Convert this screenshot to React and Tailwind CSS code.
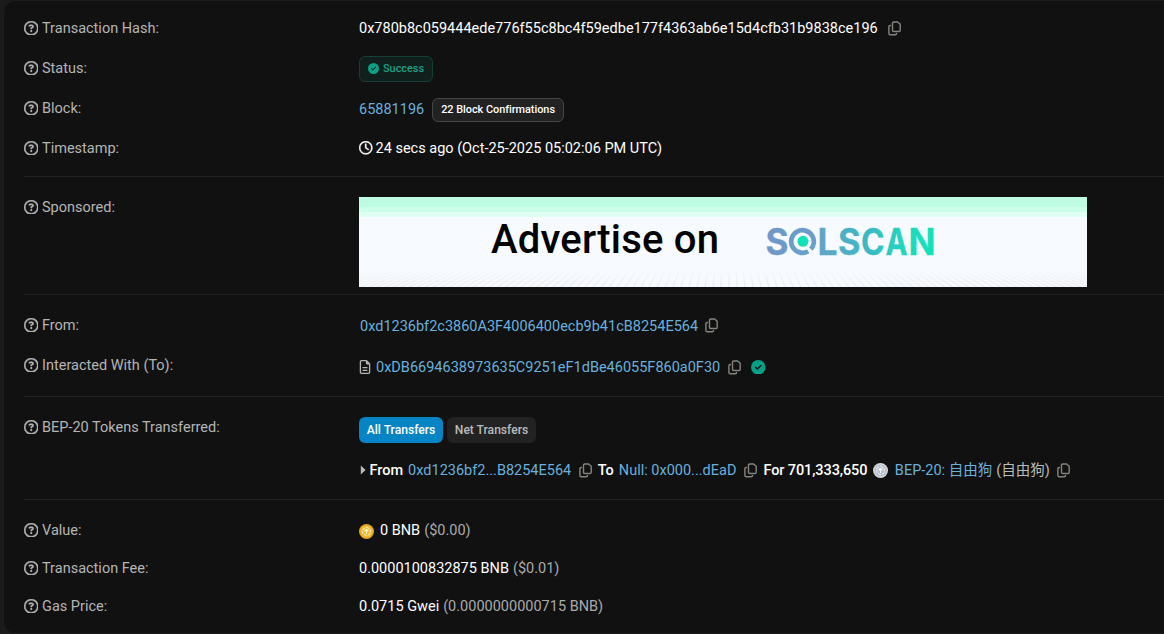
import { FaRegCircleQuestion, FaRegClock, FaCircleCheck, FaRegFileLines } from "react-icons/fa6";

const logoLetters = [
  { char: "S", x: 406.5, width: 23 },
  { char: "L", x: 458.5, width: 20 },
  { char: "S", x: 479, width: 22.5 },
  { char: "C", x: 502, width: 23.5 },
  { char: "A", x: 526.5, width: 22 },
  { char: "N", x: 549.5, width: 27 },
];

const CopyIcon = ({ className = "" }) => (
  <svg
    className={`w-[13px] h-[15px] shrink-0 text-[#85857f] ${className}`}
    viewBox="0 0 13 15"
    fill="none"
    stroke="currentColor"
    strokeWidth="1.4"
    strokeLinejoin="round"
  >
    <path d="M5.800 1h3.800l2.600 2.300v5.900c0 .8-.5 1.300-1.300 1.300H5.800c-.8 0-1.300-.5-1.300-1.300V2.300C4.500 1.500 5 1 5.800 1Z" />
    <path d="M3 4.500h-.8c-.8 0-1.300.5-1.300 1.300v6.700c0 .8.5 1.300 1.300 1.300h5c.8 0 1.300-.5 1.300-1.300V12" />
  </svg>
);

const CoinIcon = ({ className = "", ring, fill }) => (
  <svg className={`size-[15px] shrink-0 ${className}`} viewBox="0 0 16 16">
    <circle cx="8" cy="8" r="8" fill={ring} />
    <circle cx="8" cy="8" r="6.500" fill={fill} />
    <g fill="none" stroke="#fff" strokeWidth="1" opacity=".85">
      <path d="M8 3.300l4 2.300v4.700l-4 2.400-4-2.400V5.600Z" strokeDasharray="3.500 1" />
      <path d="M5.700 6.700L8 8l2.300-1.300M8 8v2.700" />
    </g>
    <circle cx="8" cy="6.600" r="1.300" fill="#fff" />
  </svg>
);

const Label = ({ text }) => (
  <div className="-ml-[0.5px] flex w-[335.5px] shrink-0 items-center gap-[4px] text-[#b5b5b5]">
    <FaRegCircleQuestion className="size-[14.5px] shrink-0" strokeWidth="14" />
    <span className="pt-0.5">{text}</span>
  </div>
);

const Row = ({ label, className = "h-10", children }) => (
  <div className={`flex items-center ${className}`}>
    <Label text={label} />
    <div className="flex items-center whitespace-nowrap [&>span]:pt-0.5">{children}</div>
  </div>
);

const Divider = () => <hr className="border-[#222222]" />;

const Banner = () => (
  <div className="relative h-[90px] w-[728px] overflow-hidden bg-[#f7faff]">
    <div className="h-2.5 bg-[#bdfbe2]" />
    <div className="h-[5px] bg-[#cbffea]" />
    <div className="h-[5px] bg-[#e0fff4]" />
    <svg className="absolute inset-0" width="728" height="90" viewBox="0 0 728 90">
      <defs>
        <linearGradient id="logo" gradientUnits="userSpaceOnUse" x1="407" y1="0" x2="575" y2="0">
          <stop offset="0" stopColor="#7196c8" />
          <stop offset="0.25" stopColor="#6a9fca" />
          <stop offset="0.6" stopColor="#3cb9c4" />
          <stop offset="0.85" stopColor="#1edabd" />
          <stop offset="1" stopColor="#12e2ba" />
        </linearGradient>
        <linearGradient id="fade" x1="0" y1="0" x2="0" y2="1">
          <stop offset="0" stopColor="#f7faff" />
          <stop offset="1" stopColor="#f7faff" stopOpacity="0" />
        </linearGradient>
      </defs>
      {Array.from({ length: 130 }, (_, i) => (
        <line key={i} x1="370" y1="-60" x2={-150 + i * 8} y2="90" stroke="#ebecf0" strokeWidth="1.400" />
      ))}
      <rect y="20" width="728" height="52" fill="#f7faff" />
      <rect y="72" width="728" height="18" fill="url(#fade)" />
      <rect width="728" height="10" fill="#bdfbe2" />
      <rect y="10" width="728" height="5" fill="#cbffea" />
      <rect y="15" width="728" height="5" fill="#e0fff4" />
      <text x="132" y="56" fontFamily="Roboto, sans-serif" fontSize="40" fontWeight="500" textLength="228" fill="#000">
        Advertise on
      </text>
      <g
        fill="url(#logo)"
        stroke="url(#logo)"
        strokeWidth="0.300"
        fontFamily="Inter, sans-serif"
        fontSize="36.500"
        fontWeight="700"
      >
        {logoLetters.map(({ char, x, width }) => (
          <text key={x} x={x} y="57.500" textLength={width} lengthAdjust="spacingAndGlyphs">
            {char}
          </text>
        ))}
      </g>
      <circle
        cx="443.500"
        cy="44.500"
        r="11.300"
        fill="none"
        stroke="url(#logo)"
        strokeWidth="4.800"
        strokeDasharray="67 4"
        transform="rotate(60 443.500 44.500)"
      />
      <circle cx="444" cy="44.300" r="5.500" fill="#12e2ba" />
    </svg>
  </div>
);

export default function App() {
  return (
    <div className="h-[634px] w-[1164px] overflow-hidden bg-[#1b1b1b] pl-[3px] font-['Roboto','Noto_Sans_CJK_SC',sans-serif] text-[14.5px] leading-[22px] text-white">
      <div className="h-[634px] w-[1180px] rounded-xl border border-[#1d1d1d] bg-[#111111] pl-5 pt-[7px]">
        <Row label="Transaction Hash:">
          <span>0x780b8c059444ede776f55c8bc4f59edbe177f4363ab6e15d4cfb31b9838ce196</span>
          <CopyIcon className="ml-[10px]" />
        </Row>
        <Row label="Status:">
          <div className="mt-0.5 flex h-[26px] items-center gap-1 rounded-md border border-[#143f36] bg-[#111f1c] px-2 text-[10.9px] font-medium text-[#1aa287]">
            <FaCircleCheck className="-mt-px size-[11px] text-[#0aa184]" />
            <span className="-mt-px">Success</span>
          </div>
        </Row>
        <Row label="Block:">
          <span className="mt-[2px] text-[#6ab0dd]">65881196</span>
          <div className="ml-2 mt-[3px] flex h-6 items-center rounded-md border border-[#464646] bg-[#222222] px-2 text-[10.9px] font-medium tracking-[-0.03px]">
            22 Block Confirmations
          </div>
        </Row>
        <Row label="Timestamp:">
          <FaRegClock className="mr-[3px] size-[13.500px]" strokeWidth="14" />
          <span>24 secs ago (Oct-25-2025 05:02:06 PM UTC)</span>
        </Row>
        <div className="h-2" />
        <Divider />
        <div className="flex h-[117px] items-start pt-5">
          <div className="flex h-5 items-center">
            <Label text="Sponsored:" />
          </div>
          <Banner />
        </div>
        <Divider />
        <Row label="From:" className="mt-[10px] h-10">
          <span className="ml-px mt-[2px] text-[#6ab0dd]">0xd1236bf2c3860A3F4006400ecb9b41cB8254E564</span>
          <CopyIcon className="ml-[7px] mt-px" />
        </Row>
        <Row label="Interacted With (To):">
          <FaRegFileLines className="mr-[5px] mt-1 h-[14px] w-[12px] text-[#b5b5b5]" />
          <span className="mt-1 text-[#6ab0dd]">0xDB6694638973635C9251eF1dBe46055F860a0F30</span>
          <CopyIcon className="ml-2 mt-1" />
          <FaCircleCheck className="ml-[10px] mt-1 size-[14.5px] text-[#00a186]" />
        </Row>
        <div className="h-[11px]" />
        <Divider />
        <Row label="BEP-20 Tokens Transferred:" className="mt-[10px] h-10">
          <div className="mt-[6px] flex gap-1 text-[12.100px] font-medium">
            <div className="flex h-[26px] w-[84px] items-center justify-center rounded-md bg-[#0784c3]">All Transfers</div>
            <div className="flex h-[26px] w-[89px] items-center justify-center rounded-md bg-[#222222] text-[#bbbbbb]">
              Net Transfers
            </div>
          </div>
        </Row>
        <div className="ml-[336px] flex h-[46px] items-center whitespace-nowrap [&>span]:pt-0.5">
          <svg className="h-[10px] w-[6px]" viewBox="0 0 6 10">
            <path d="M.8 .5L5.600 5L.8 9.500Z" fill="#bbbbbb" />
          </svg>
          <span className="ml-[3.5px] font-medium">From</span>
          <span className="ml-[5px] text-[#6ab0dd]">0xd1236bf2...B8254E564</span>
          <CopyIcon className="ml-[7.5px]" />
          <span className="ml-[6px] font-medium">To</span>
          <span className="ml-[5px] text-[#6ab0dd]">Null: 0x000...dEaD</span>
          <CopyIcon className="ml-2" />
          <span className="ml-[6px] font-medium tracking-[-0.1px]">For 701,333,650</span>
          <CoinIcon className="ml-[6px]" ring="#d5d9e1" fill="#b8bfcb" />
          <span className="ml-[6.5px] text-[#6ab0dd]">BEP-20: 自由狗</span>
          <span className="ml-1 text-[#bbbbbb]">(自由狗)</span>
          <CopyIcon className="ml-[7px]" />
        </div>
        <div className="h-[6px]" />
        <Divider />
        <Row label="Value:" className="mt-[11px] h-[38px]">
          <CoinIcon className="mr-[6px] mt-0.5" ring="#e5a51c" fill="#f0b929" />
          <span>0 BNB</span>
          <span className="ml-1 text-[#aaaaaa]">($0.00)</span>
        </Row>
        <Row label="Transaction Fee:" className="h-[38px]">
          <span>0.0000100832875 BNB</span>
          <span className="ml-1 text-[#aaaaaa]">($0.01)</span>
        </Row>
        <Row label="Gas Price:" className="h-[38px]">
          <span>0.0715 Gwei</span>
          <span className="ml-1 text-[#aaaaaa]">(0.0000000000715 BNB)</span>
        </Row>
      </div>
    </div>
  );
}
